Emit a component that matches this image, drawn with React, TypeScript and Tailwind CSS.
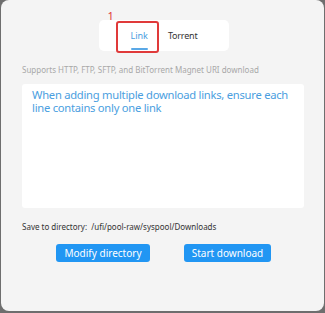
import React, { useState } from 'react';

const App: React.FC = () => {
  const [tab, setTab] = useState<'link' | 'torrent'>('link');
  const [links, setLinks] = useState('');

  return (
    <div className="w-[325px] h-[313px] bg-[#6e6e6e] pl-px pr-px pb-[2px] font-['Noto_Sans',sans-serif]">
      <div className="h-full bg-[#f4f4f4] rounded-[8px] flex flex-col px-[21px]">
        {/* Tabs */}
        <div className="flex justify-center pt-[20px] pl-[2px]">
          <div className="relative w-[130px] h-[31px] bg-white rounded-[5px] flex items-end">
            <button
              onClick={() => setTab('link')}
              className={`ml-[32px] h-full flex flex-col items-center justify-center relative text-[9px] ${
                tab === 'link' ? 'text-[#4a9ee0]' : 'text-[#333]'
              }`}
            >
              <span className="mt-[1px]">Link</span>
              {tab === 'link' && <span className="absolute bottom-[1px] left-0 right-0 h-[2px] bg-[#5aa8e6] rounded" />}
            </button>
            <button
              onClick={() => setTab('torrent')}
              className={`ml-[20px] h-full flex items-center text-[9px] tracking-[-0.2px] ${tab === 'torrent' ? 'text-[#4a9ee0]' : 'text-[#333]'}`}
            >
              <span className="mt-[1px]">Torrent</span>
            </button>
            {/* annotation */}
            <div className="absolute left-[17px] top-[1px] w-[43px] h-[32px] border-2 border-[#e03a3a] rounded-[3px] pointer-events-none" />
            <span className="absolute left-[9px] top-[-10px] text-[11px] leading-none text-[#e03a3a]">1</span>
          </div>
        </div>

        <p className="mt-[13px] text-[8px] leading-[12px] text-[#a8a8a8]">
          Supports HTTP, FTP, SFTP, and BitTorrent Magnet URI download
        </p>

        <textarea
          value={links}
          onChange={(e) => setLinks(e.target.value)}
          placeholder="When adding multiple download links, ensure each line contains only one link"
          className="mt-[8px] w-[282px] h-[124px] bg-white rounded-[3px] resize-none outline-none pl-[10px] pr-[6px] py-[4px] text-[11.2px] tracking-[-0.25px] leading-[13px] text-[#333] placeholder:text-[#4a9ee0]"
        />

        <div className="mt-[13px] text-[8px] leading-[12px] text-[#333]">
          Save to directory:&nbsp;&nbsp;/ufi/pool-raw/syspool/Downloads
        </div>

        <div className="mt-[11px] flex justify-center gap-[34px] pl-[2px]">
          <button className="w-[94px] h-[18px] rounded-[3px] bg-[#2196f3] text-white text-[10px] leading-none">
            Modify directory
          </button>
          <button className="w-[87px] h-[18px] rounded-[3px] bg-[#2196f3] text-white text-[10px] leading-none">
            Start download
          </button>
        </div>
      </div>
    </div>
  );
};

export default App;
